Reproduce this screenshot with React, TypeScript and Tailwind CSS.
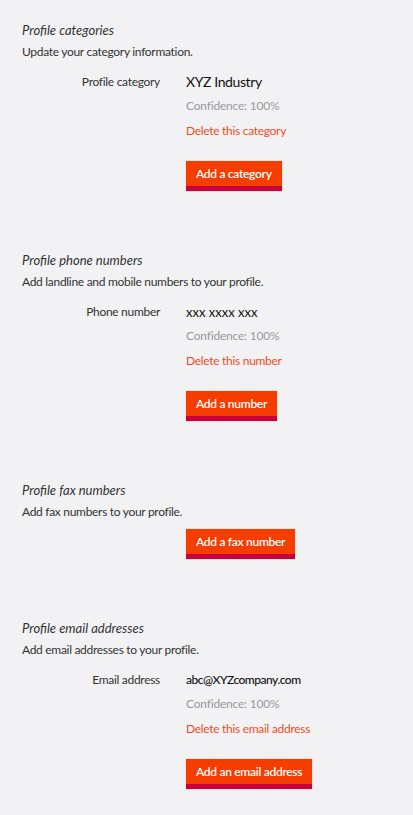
import React from "react";

type Item = { label: string; value: string; valueClass: string; del: string };

const sections: {
  title: string;
  desc: string;
  item?: Item;
  button: string;
}[] = [
  {
    title: "Profile categories",
    desc: "Update your category information.",
    item: {
      label: "Profile category",
      value: "XYZ Industry",
      valueClass: "text-[14px] tracking-[-0.4px]",
      del: "Delete this category",
    },
    button: "Add a category",
  },
  {
    title: "Profile phone numbers",
    desc: "Add landline and mobile numbers to your profile.",
    item: {
      label: "Phone number",
      value: "xxx xxxx xxx",
      valueClass: "text-[13px]",
      del: "Delete this number",
    },
    button: "Add a number",
  },
  {
    title: "Profile fax numbers",
    desc: "Add fax numbers to your profile.",
    button: "Add a fax number",
  },
  {
    title: "Profile email addresses",
    desc: "Add email addresses to your profile.",
    item: {
      label: "Email address",
      value: "abc@XYZcompany.com",
      valueClass: "text-[12px] font-medium tracking-[-0.5px]",
      del: "Delete this email address",
    },
    button: "Add an email address",
  },
];

function AddButton({ label }: { label: string }) {
  return (
    <button className="h-[30px] px-[10px] bg-[#f53d00] border-b-[5px] border-[#c8003c] outline outline-1 outline-[#fbe4e0] text-white text-[12px] font-semibold tracking-[-0.3px] leading-[25px]">
      {label}
    </button>
  );
}

export default function App() {
  return (
    <div
      className="min-h-[815px] w-full bg-[#f2f2f4] pl-[22px] pt-[18px] text-[#333]"
      style={{ fontFamily: "Lato, 'Noto Sans', sans-serif" }}
    >
      {sections.map((s, i) => (
        <section key={s.title} className={i === 0 ? "" : "mt-[57px]"}>
          <h2 className="text-[13px] italic leading-[24px] text-[#333]">{s.title}</h2>
          <p className="text-[12px] leading-[20px] tracking-[-0.3px] text-[#333]">{s.desc}</p>
          {s.item ? (
            <div className="mt-[8px] grid grid-cols-[138px_1fr] gap-x-[26px]">
              <div className="text-right text-[12px] leading-[24px] tracking-[-0.3px] text-[#333]">
                {s.item.label}
              </div>
              <div className="flex flex-col items-start">
                <div className={`${s.item.valueClass} leading-[24px] text-[#111]`}>
                  {s.item.value}
                </div>
                <div className="text-[12px] leading-[24.5px] tracking-[-0.2px] text-[#999]">
                  Confidence: 100%
                </div>
                <a href="#" className="text-[12px] leading-[24.5px] tracking-[-0.3px] text-[#f24c1c]">
                  {s.item.del}
                </a>
                <div className="mt-[17px]">
                  <AddButton label={s.button} />
                </div>
              </div>
            </div>
          ) : (
            <div className="mt-[6px] pl-[164px]">
              <AddButton label={s.button} />
            </div>
          )}
        </section>
      ))}
    </div>
  );
}
